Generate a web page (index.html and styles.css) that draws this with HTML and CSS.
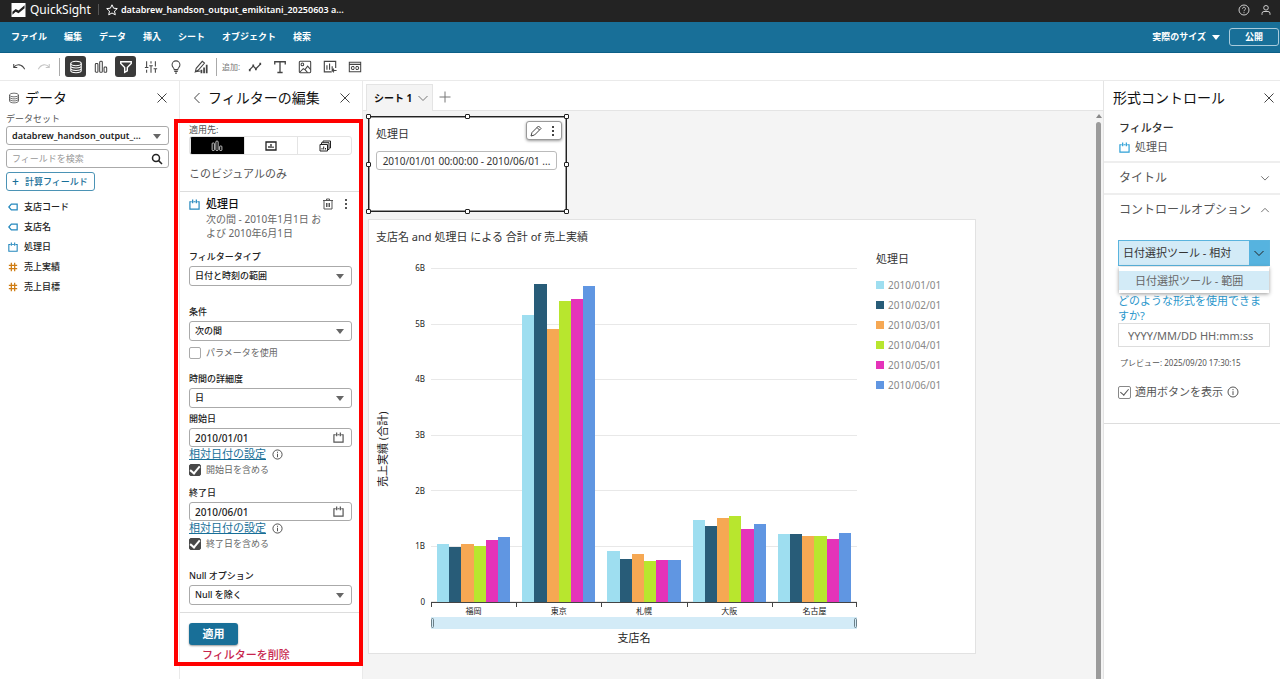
FILE: index.html
```html
<!DOCTYPE html>
<html lang="ja">

<head>
    <meta charset="UTF-8">
    <meta name="viewport" content="width=device-width, initial-scale=1.0">
    <title>QuickSight</title>
    <link rel="stylesheet" href="styles.css">
</head>

<body>
    <!-- shared icons -->
    <svg class="sprite" aria-hidden="true">
        <symbol id="i-close" viewBox="0 0 12 12"><path d="M1.5 1.5l9 9M10.5 1.5l-9 9" /></symbol>
        <symbol id="i-down" viewBox="0 0 12 12"><path d="M1.5 4L6 8.5L10.5 4" /></symbol>
        <symbol id="i-up" viewBox="0 0 12 12"><path d="M1.5 8.5L6 4l4.500 4.500" /></symbol>
        <symbol id="i-db" viewBox="0 0 16 16"><ellipse cx="8" cy="4" rx="6" ry="2.500" /><path d="M2 4v8c0 1.400 2.700 2.500 6 2.500s6-1.100 6-2.500V4M2 6.700c0 1.400 2.700 2.500 6 2.500s6-1.100 6-2.500M2 9.400c0 1.400 2.700 2.500 6 2.500s6-1.100 6-2.500" /></symbol>
        <symbol id="i-bars" viewBox="0 0 16 16"><rect x="1.500" y="4" width="3" height="10" rx="1" /><rect x="6.500" y="1.500" width="3" height="12.500" rx="1" /><rect x="11.500" y="8" width="3" height="6" rx="1" /></symbol>
        <symbol id="i-cal" viewBox="0 0 12 12"><path d="M3 3H1v8h10V3H9M5 3h2M4 .5v4M8 .5v4" stroke-width="1.300" /></symbol>
        <symbol id="i-tag" viewBox="0 0 12 12"><path d="M4 2.500h7v7H4L1 6z" /></symbol>
        <symbol id="i-hash" viewBox="0 0 12 12"><path d="M4 1v10M8 1v10M1 4h10M1 8h10" /></symbol>
        <symbol id="i-info" viewBox="0 0 12 12"><circle cx="6" cy="6" r="5" /><path d="M6 5.200V9M6 3v1.200" /></symbol>
        <symbol id="i-dots" viewBox="0 0 12 12"><path d="M6 1v2M6 5v2M6 9v2" stroke-width="2" /></symbol>
    </svg>

    <header class="topbar">
        <svg class="logo" viewBox="0 0 15 15"><path d="M0 0h15v15H0z" fill="#fff" /><path d="M1 9.500l3.500-3 3 1.500L14 2.500v3L7.500 11l-3-1.500L1 12.500z" fill="#232323" /></svg>
        <span class="brand">QuickSight</span>
        <span class="divider"></span>
        <button class="icon-btn" aria-label="お気に入り"><svg class="icon" viewBox="0 0 12 12"><path d="M6 .8l1.600 3.400 3.700.4-2.800 2.500.8 3.700L6 9l-3.300 1.800.8-3.700L.7 4.600l3.700-.4z" /></svg></button>
        <span class="doc-name">databrew_handson_output_emikitani_20250603 a...</span>
        <div class="account">
            <button class="icon-btn" aria-label="ヘルプ"><svg class="icon" viewBox="0 0 12 12"><circle cx="6" cy="6" r="5" /><path d="M4.500 4.700c0-2 3-2 3 0C7.500 6 6 5.800 6 7.200M6 8.200v1" /></svg></button>
            <button class="icon-btn" aria-label="アカウント"><svg class="icon" viewBox="0 0 12 12"><circle cx="6" cy="3.800" r="2.300" /><path d="M2 10.800V9.500Q2 7.500 4 7.500h4q2 0 2 2v1.300" /></svg></button>
        </div>
    </header>

    <nav class="menubar">
        <a href="#">ファイル</a>
        <a href="#">編集</a>
        <a href="#">データ</a>
        <a href="#">挿入</a>
        <a href="#">シート</a>
        <a href="#">オブジェクト</a>
        <a href="#">検索</a>
        <div class="publish">
            <button class="size-btn">実際のサイズ <i class="caret"></i></button>
            <button class="publish-btn">公開</button>
        </div>
    </nav>

    <div class="toolbar">
        <button class="tool" aria-label="元に戻す"><svg class="icon" viewBox="0 0 16 16"><path d="M2 4.500v4h4M2 8.500C5 4.500 11 4 14.500 10.500" /></svg></button>
        <button class="tool off" aria-label="やり直す"><svg class="icon" viewBox="0 0 16 16"><path d="M14 4.500v4h-4M14 8.500C11 4.500 5 4 1.500 10.500" /></svg></button>
        <span class="line"></span>
        <button class="tool on" aria-label="データ"><svg class="icon"><use href="#i-db" /></svg></button>
        <button class="tool" aria-label="ビジュアル"><svg class="icon"><use href="#i-bars" /></svg></button>
        <button class="tool on" aria-label="フィルター"><svg class="icon" viewBox="0 0 16 16"><path d="M2 2h12v2L9.500 8.500v4L6.500 14V8.500L2 4z" stroke-width="1.600" /></svg></button>
        <button class="tool" aria-label="パラメータ"><svg class="icon" viewBox="0 0 16 16"><path d="M3 1.500v7M3 11v3.500M8 1.500V4M8 6.500v8M13 1.500v6M13 10v4.500M1 8.500h4M6 6.500h4M11 10h4" /></svg></button>
        <button class="tool" aria-label="インサイト"><svg class="icon" viewBox="0 0 16 16"><path d="M6 11C6 9 3.500 8.500 3.500 5.500a4.500 4.500 0 0 1 9 0C12.500 8.500 10 9 10 11zM6 13h4M7 15h2" /></svg></button>
        <button class="tool" aria-label="テーマ"><svg class="icon" viewBox="0 0 16 16"><path d="M1.500 13.500l1-4 7-8 2.500 2-7 8zM1.500 13.500l6-1" /><path d="M8.500 11v4M11.500 8.500V15M14.500 5.500V15" stroke-width="2" /></svg></button>
        <span class="line"></span>
        <span class="add-label">追加:</span>
        <button class="tool" aria-label="ビジュアルを追加"><svg class="icon" viewBox="0 0 16 16"><path d="M2 11l4-4 3 3 5-5" stroke-width="1.500" /><path d="M1 11.500h2M5 6.500h2M8 10.500h2M13 4.500h2" stroke-width="2.500" /></svg></button>
        <button class="tool" aria-label="テキストを追加"><svg class="icon" viewBox="0 0 16 16"><path d="M2 5V2h12v3M8 2v12M5 14.300h6" stroke-width="1.500" /></svg></button>
        <button class="tool" aria-label="画像を追加"><svg class="icon" viewBox="0 0 16 16"><rect x="1.500" y="1.500" width="13" height="13" rx="1" /><circle cx="5" cy="5" r="1.500" /><path d="M2 14l4-4 2 1 3-4 3.500 4M8 11l3 3.500" /></svg></button>
        <button class="tool" aria-label="コントロールを追加"><svg class="icon" viewBox="0 0 16 16"><path d="M10 13.500H1.500v-12h13V9M4.500 11V6M7.500 11V4M10.500 11V7M15.500 12h-5M12.500 10l-2 2 2 2" stroke-width="1.300" /></svg></button>
        <button class="tool" aria-label="埋め込みを追加"><svg class="icon" viewBox="0 0 16 16"><path d="M1.500 2.500h13v11h-13zM1.500 5h13M7 7.500H5.500a1.700 1.700 0 0 0 0 3.400H7M9 7.500h1.500a1.700 1.700 0 0 1 0 3.400H9M6 9.200h4" /></svg></button>
    </div>

    <div class="main">
        <aside class="data-panel">
            <div class="panel-head">
                <svg class="icon head-icon"><use href="#i-db" /></svg>
                <h2>データ</h2>
                <button class="icon-btn push" aria-label="閉じる"><svg class="icon"><use href="#i-close" /></svg></button>
            </div>
            <label class="data-label" for="dataset">データセット</label>
            <div class="select"><select id="dataset" class="bold"><option>databrew_handson_output_...</option></select></div>
            <div class="search">
                <input type="text" placeholder="フィールドを検索" aria-label="フィールドを検索">
                <svg class="icon" viewBox="0 0 12 12"><circle cx="5" cy="5" r="3.500" /><path d="M7.600 7.600L11 11" /></svg>
            </div>
            <button class="calc-btn"><span>+</span>計算フィールド</button>
            <ul class="fields">
                <li><svg class="icon dim"><use href="#i-tag" /></svg>支店コード</li>
                <li><svg class="icon dim"><use href="#i-tag" /></svg>支店名</li>
                <li><svg class="icon dim"><use href="#i-cal" /></svg>処理日</li>
                <li><svg class="icon num"><use href="#i-hash" /></svg>売上実績</li>
                <li><svg class="icon num"><use href="#i-hash" /></svg>売上目標</li>
            </ul>
        </aside>

        <section class="filter-panel">
            <div class="panel-head">
                <button class="icon-btn" aria-label="戻る"><svg class="icon" viewBox="0 0 12 12"><path d="M8.500 1L3.500 6l5 5" /></svg></button>
                <h2>フィルターの編集</h2>
                <button class="icon-btn push" aria-label="閉じる"><svg class="icon"><use href="#i-close" /></svg></button>
            </div>
            <div class="filter-body">
                <div class="scope">
                    <span class="scope-label">適用先:</span>
                    <div class="segments">
                        <button class="active" aria-label="このビジュアル"><svg class="icon"><use href="#i-bars" /></svg></button>
                        <button aria-label="このシート"><svg class="icon" viewBox="0 0 12 12"><path d="M1 2h10v8H1z" stroke-width="1.300" /><path d="M4 8V6M6 8V4M8 8V6.500" stroke-width="1.300" /></svg></button>
                        <button aria-label="すべてのシート"><svg class="icon" viewBox="0 0 12 12"><path d="M1 4.500h7.500V11H1zM2.500 4V2.700H10V9.500H9M4 2.500V1h7.500v7H10.500M3 9.500V8M4.700 9.500V6.500M6.500 9.500V8" /></svg></button>
                    </div>
                    <p>このビジュアルのみ</p>
                </div>
                <form class="filter-form">
                    <div class="filter-name">
                        <svg class="icon dim"><use href="#i-cal" /></svg>
                        <h3>処理日</h3>
                        <button type="button" class="icon-btn push" aria-label="削除"><svg class="icon" viewBox="0 0 12 12"><path d="M1 2.500h10M4.500 2V1h3v1M2 2.500V11h8V2.500M4.500 5v4M6 5v4M7.500 5v4" /></svg></button>
                        <button type="button" class="icon-btn" aria-label="メニュー"><svg class="icon"><use href="#i-dots" /></svg></button>
                    </div>
                    <p class="summary">次の間 - 2010年1月1日 および 2010年6月1日</p>

                    <label class="name" for="type">フィルタータイプ</label>
                    <div class="select"><select id="type"><option>日付と時刻の範囲</option></select></div>

                    <label class="name gap-l" for="cond">条件</label>
                    <div class="select"><select id="cond"><option>次の間</option></select></div>
                    <label class="check param"><input type="checkbox">パラメータを使用</label>

                    <label class="name" for="grain">時間の詳細度</label>
                    <div class="select"><select id="grain"><option>日</option></select></div>

                    <label class="name gap-s" for="start">開始日</label>
                    <div class="date"><input type="text" id="start" value="2010/01/01"><svg class="icon"><use href="#i-cal" /></svg></div>
                    <div class="relative-date"><a href="#">相対日付の設定</a><svg class="icon"><use href="#i-info" /></svg></div>
                    <label class="check"><input type="checkbox" checked>開始日を含める</label>

                    <label class="name" for="end">終了日</label>
                    <div class="date"><input type="text" id="end" value="2010/06/01"><svg class="icon"><use href="#i-cal" /></svg></div>
                    <div class="relative-date"><a href="#">相対日付の設定</a><svg class="icon"><use href="#i-info" /></svg></div>
                    <label class="check"><input type="checkbox" checked>終了日を含める</label>

                    <label class="name gap-l" for="nulls">Null オプション</label>
                    <div class="select"><select id="nulls"><option>Null を除く</option></select></div>
                </form>
                <div class="filter-actions">
                    <button class="apply">適用</button>
                    <button class="remove">フィルターを削除</button>
                </div>
            </div>
        </section>

        <main class="workspace">
            <div class="tabs">
                <button class="tab">シート 1 <svg class="icon"><use href="#i-down" /></svg></button>
                <button class="icon-btn" aria-label="シートを追加"><svg class="icon" viewBox="0 0 12 12"><path d="M6 .5v11M.5 6h11" /></svg></button>
            </div>
            <div class="scroll-area">
                <div class="sheet">
                    <div class="control-card">
                        <h3>処理日</h3>
                        <button class="range">2010/01/01 00:00:00 - 2010/06/01 ...</button>
                        <div class="card-tools">
                            <button class="icon-btn" aria-label="編集"><svg class="icon" viewBox="0 0 12 12"><path d="M1 11l1-3.500L8.500 1 11 3.500 4.500 10zM7 2.500L9.500 5" /></svg></button>
                            <button class="icon-btn" aria-label="メニュー"><svg class="icon"><use href="#i-dots" /></svg></button>
                        </div>
                        <div class="handles"><i></i><i></i><i></i><i></i><b></b><i></i><i></i><i></i><i></i></div>
                    </div>

                    <div class="chart-card">
                        <h3>支店名 and 処理日 による 合計 of 売上実績</h3>
                        <div class="chart">
                            <div class="y-title">売上実績 (合計)</div>
                            <div class="y-axis">
                                <span>6B</span><span>5B</span><span>4B</span><span>3B</span><span>2B</span><span>1B</span><span>0</span>
                            </div>
                            <div class="grid-lines"><i></i><i></i><i></i><i></i><i></i><i></i><i></i></div>
                            <div class="bars" id="bars"></div>
                            <div class="x-axis">
                                <span>福岡</span><span>東京</span><span>札幌</span><span>大阪</span><span>名古屋</span>
                            </div>
                            <div class="zoom-bar"><i></i><i></i></div>
                            <div class="x-title">支店名</div>
                            <div class="legend">
                                <h4>処理日</h4>
                                <ul>
                                    <li><i class="s1"></i>2010/01/01</li>
                                    <li><i class="s2"></i>2010/02/01</li>
                                    <li><i class="s3"></i>2010/03/01</li>
                                    <li><i class="s4"></i>2010/04/01</li>
                                    <li><i class="s5"></i>2010/05/01</li>
                                    <li><i class="s6"></i>2010/06/01</li>
                                </ul>
                            </div>
                        </div>
                    </div>
                </div>
                <div class="scrollbar"><i class="arrow"></i><i class="thumb"></i></div>
            </div>
        </main>

        <aside class="format-panel">
            <div class="panel-head">
                <h2>形式コントロール</h2>
                <button class="icon-btn push" aria-label="閉じる"><svg class="icon"><use href="#i-close" /></svg></button>
            </div>
            <div class="format-filter">
                <h3>フィルター</h3>
                <p><svg class="icon"><use href="#i-cal" /></svg>処理日</p>
            </div>
            <button class="section-btn">タイトル<svg class="icon"><use href="#i-down" /></svg></button>
            <div class="options">
                <button class="section-btn">コントロールオプション<svg class="icon"><use href="#i-up" /></svg></button>
                <div class="options-body">
                    <div class="style-select">
                        <select aria-label="スタイル"><option>日付選択ツール - 相対</option></select>
                        <svg class="icon"><use href="#i-down" /></svg>
                        <ul class="style-menu"><li>日付選択ツール - 範囲</li></ul>
                    </div>
                    <a class="format-help" href="#">どのような形式を使用できますか?</a>
                    <input class="format-input" type="text" placeholder="YYYY/MM/DD HH:mm:ss" aria-label="日付形式">
                    <p class="preview">プレビュー: 2025/09/20 17:30:15</p>
                    <label class="show-apply"><input type="checkbox" checked>適用ボタンを表示 <svg class="icon"><use href="#i-info" /></svg></label>
                </div>
            </div>
        </aside>
    </div>

    <script>
        // sales per branch in billions, one value for each month
        const sales = [
            [1.05, 0.99, 1.04, 1.01, 1.12, 1.17],
            [5.15, 5.72, 4.91, 5.41, 5.44, 5.67],
            [0.91, 0.77, 0.87, 0.73, 0.75, 0.76],
            [1.47, 1.37, 1.51, 1.55, 1.31, 1.40],
            [1.22, 1.22, 1.18, 1.18, 1.13, 1.24],
        ];
        const max = 6;

        document.getElementById("bars").innerHTML = sales.map((row) => {
            let cols = row.map((v, i) => `<i class="s${i + 1}" style="height:${v / max * 100}%"></i>`).join("");
            return `<div class="group">${cols}</div>`;
        }).join("");
    </script>
</body>

</html>
```
FILE: styles.css
```css
* {
    padding: 0;
    margin: 0;
    box-sizing: border-box;
}

body {
    min-height: 100vh;
    display: flex;
    flex-direction: column;
    font-family: "Noto Sans", "Noto Sans CJK JP", sans-serif;
    font-size: 9px;
    line-height: 12px;
    color: #222;
    background-color: #fff;
}

button,
input,
select {
    font: inherit;
    color: inherit;
    border: none;
    background: none;
}

button {
    cursor: pointer;
}

ul {
    list-style: none;
}

h2 {
    font-size: 14px;
    font-weight: 400;
    line-height: 20px;
    color: #111;
}

h3,
h4 {
    font-size: 11px;
    font-weight: 500;
    line-height: 16px;
}

.sprite {
    display: none;
}

.icon {
    display: block;
    flex: none;
    width: 12px;
    height: 12px;
    fill: none;
    stroke: currentColor;
}

.icon-btn {
    flex: none;
}

.push {
    margin-left: auto;
}

.caret {
    border: 4px solid transparent;
    border-top: 5px solid #fff;
    border-bottom: none;
}

/* top bars */
.topbar {
    height: 22px;
    display: flex;
    align-items: center;
    padding: 0 8px 3px 11px;
    background-color: #232323;
    color: #fff;
}

.logo {
    width: 15px;
    height: 14px;
    margin-right: 4px;
}

.brand {
    font-size: 12px;
    line-height: 16px;
}

.divider {
    width: 1px;
    height: 11px;
    margin: 0 7px;
    background-color: #555;
}

.doc-name {
    margin-left: 3px;
    font-weight: 600;
}

.account {
    margin-left: auto;
    display: flex;
    gap: 10px;
    color: #ccc;
}

.menubar {
    height: 31px;
    display: flex;
    align-items: center;
    gap: 17px;
    padding: 0 1px 0 11px;
    background-color: #186f98;
    border-bottom: 1px solid #0c5f87;
    color: #fff;
    font-weight: 700;
}

.menubar a {
    color: #fff;
    text-decoration: none;
}

.publish {
    margin-left: auto;
    display: flex;
    align-items: center;
    gap: 9px;
}

.size-btn {
    display: flex;
    align-items: center;
    gap: 6px;
}

.publish-btn {
    width: 50px;
    height: 18px;
    border: 1px solid #a9cbdc;
    border-radius: 3px;
}

.toolbar {
    height: 28px;
    display: flex;
    align-items: center;
    gap: 4px;
    padding: 0 8px;
    border-bottom: 1px solid #eaeaea;
    color: #444;
}

.tool {
    width: 21px;
    height: 21px;
    display: grid;
    place-items: center;
    border-radius: 3px;
}

.tool .icon {
    width: 14px;
    height: 14px;
    stroke-width: 1.2;
}

.tool.on {
    background-color: #3a3a3a;
    color: #fff;
}

.tool.off {
    color: #c4c4c4;
}

.line {
    width: 1px;
    height: 18px;
    margin: 0 1px;
    background-color: #aaa;
}

.add-label {
    color: #777;
    font-size: 8px;
}

/* panels */
.main {
    flex: 1;
    display: flex;
}

.panel-head {
    height: 32px;
    display: flex;
    align-items: center;
    gap: 5px;
    color: #444;
}

.data-panel {
    width: 180px;
    flex: none;
    padding: 0 10px 0 6px;
    border-right: 1px solid #eaeaea;
}

.data-panel .panel-head {
    padding: 2px 1px 0 2px;
}

.data-label {
    display: block;
    margin-bottom: 1px;
    color: #555;
}

.select {
    position: relative;
}

.select select,
.date,
.search {
    width: 100%;
    height: 20px;
    padding: 0 5px;
    border: 1px solid #aaa;
    border-radius: 3px;
    appearance: none;
}

.select::after {
    content: "";
    position: absolute;
    right: 8px;
    top: 8px;
    border: 4px solid transparent;
    border-top: 5px solid #666;
    border-bottom: none;
}

.data-panel select,
.search,
.calc-btn,
.date {
    height: 19px;
}

select.bold {
    font-weight: 600;
}

.search,
.date {
    display: flex;
    align-items: center;
}

.search {
    margin: 4px 0;
}

.search input,
.date input {
    flex: 1;
    min-width: 0;
    outline: none;
}

.search input::placeholder {
    color: #999;
}

.search .icon {
    stroke-width: 1.5;
}

.calc-btn {
    display: flex;
    align-items: center;
    gap: 6px;
    padding: 0 6px 0 5px;
    border: 1px solid #4b93b5;
    border-radius: 3px;
    color: #186f98;
    font-weight: 500;
}

.calc-btn span {
    font-size: 12px;
}

.fields {
    margin-top: 6px;
}

.fields li {
    height: 20px;
    display: flex;
    align-items: center;
    gap: 6px;
    padding-left: 2px;
    font-weight: 500;
}

.fields .icon {
    width: 10px;
    height: 10px;
    stroke-width: 1.5;
}

.dim {
    color: #2588bd;
}

.num {
    color: #cf7c12;
}

/* filter editor */
.filter-panel {
    width: 183px;
    flex: none;
    border-right: 1px solid #eaeaea;
}

.filter-panel .panel-head {
    padding: 2px 11px 0 11px;
}

.filter-body {
    position: relative;
    padding: 11px 0 4px;
}

/* red frame round the whole filter form */
.filter-body::after {
    content: "";
    position: absolute;
    top: 6px;
    right: -1px;
    bottom: 0;
    left: -6px;
    border: 4px solid #f00;
    pointer-events: none;
}

.scope {
    padding: 0 10px 9px 9px;
    border-bottom: 1px solid #ddd;
    color: #555;
}

.scope-label {
    display: block;
}

.segments {
    height: 19px;
    display: flex;
    border: 1px solid #e4e4e4;
    border-radius: 3px;
    overflow: hidden;
}

.segments button {
    flex: 1;
    display: grid;
    place-items: center;
    color: #222;
    border-left: 1px solid #e4e4e4;
}

.segments button.active {
    background-color: #000;
    color: #fff;
}

.scope p {
    margin-top: 11px;
    font-size: 11px;
    line-height: 16px;
}

.filter-form {
    padding: 4px 10px 7px 9px;
    border-bottom: 1px solid #ddd;
}

.filter-name {
    display: flex;
    align-items: center;
    gap: 6px;
    color: #555;
}

.filter-name h3 {
    color: #111;
}

.filter-name .dim {
    width: 11px;
    height: 11px;
    color: #2588bd;
}

.summary {
    padding: 0 30px 0 17px;
    font-size: 10px;
    line-height: 14px;
    color: #666;
}

.name {
    display: block;
    margin: 11px 0 3px;
    font-size: 9px;
    font-weight: 500;
}

.name.gap-l {
    margin-top: 20px;
}

.name.gap-s {
    margin-top: 5px;
}

.filter-form select {
    font-weight: 500;
}

.date input {
    font-size: 10px;
    font-weight: 500;
}

.date .icon {
    margin-right: 2px;
    width: 11px;
    height: 11px;
    color: #555;
}

.relative-date {
    display: flex;
    align-items: center;
    gap: 6px;
    font-size: 11px;
    line-height: 14px;
    color: #444;
}

.relative-date a {
    color: #186f98;
}

.relative-date .icon {
    width: 11px;
    height: 11px;
}

.check {
    display: flex;
    align-items: center;
    gap: 5px;
    margin-top: 3px;
    color: #666;
}

.check.param {
    margin: 6px 0 14px;
}

.check input,
.show-apply input {
    appearance: none;
    width: 12px;
    height: 12px;
    display: grid;
    place-items: center;
    border: 1px solid #aaa;
    border-radius: 2px;
}

.check input:checked {
    background-color: #484848;
    border-color: #484848;
    color: #fff;
}

.check input:checked::after,
.show-apply input:checked::after {
    content: "";
    width: 4px;
    height: 8px;
    border: solid currentColor;
    border-width: 0 2px 2px 0;
    transform: rotate(40deg);
    margin-top: -2px;
}

.filter-actions {
    padding: 10px 9px 0;
    display: flex;
    flex-direction: column;
    align-items: flex-start;
    gap: 3px;
    font-size: 11px;
    line-height: 14px;
}

.apply {
    width: 49px;
    height: 22px;
    border-radius: 3px;
    background-color: #186f98;
    box-shadow: 0 1px 2px rgba(0, 0, 0, 0.4);
    color: #fff;
    font-weight: 700;
}

.remove {
    margin-left: 13px;
    color: #c7254e;
    font-weight: 500;
}

/* sheet */
.workspace {
    flex: 1;
    min-width: 0;
    display: flex;
    flex-direction: column;
}

.tabs {
    height: 30px;
    display: flex;
    align-items: center;
    gap: 6px;
    padding: 3px 3px 0;
    border-bottom: 1px solid #e4e4e4;
    color: #777;
}

.tab {
    height: 27px;
    display: flex;
    align-items: center;
    gap: 5px;
    padding: 0 3px 0 7px;
    background-color: #f4f4f4;
    border: 1px solid #e4e4e4;
    border-bottom: none;
    color: #111;
    font-size: 10px;
    font-weight: 700;
}

.tab .icon {
    color: #777;
}

.scroll-area {
    flex: 1;
    display: flex;
    background-color: #f4f4f4;
}

.sheet {
    flex: 1;
    display: flex;
    flex-direction: column;
    align-items: flex-start;
    gap: 7px;
    padding: 5px;
}

.control-card {
    position: relative;
    width: 199px;
    height: 96px;
    padding: 9px 7px;
    background-color: #fff;
    border: 1px solid #222;
    outline: 1px solid #999;
    outline-offset: -2px;
}

.control-card h3,
.chart-card h3,
.legend h4 {
    font-weight: 400;
    color: #333;
}

.range {
    width: 181px;
    height: 19px;
    margin-top: 9px;
    border: 1px solid #bbb;
    border-radius: 3px;
    color: #333;
    font-size: 10px;
}

.card-tools {
    position: absolute;
    top: 4px;
    right: 4px;
    width: 36px;
    height: 19px;
    display: flex;
    align-items: center;
    justify-content: space-around;
    background-color: #fff;
    border: 1px solid #999;
    border-radius: 3px;
    box-shadow: 0 1px 3px rgba(0, 0, 0, 0.4);
    color: #444;
}

.handles {
    position: absolute;
    inset: -3px;
    display: grid;
    grid-template-columns: repeat(3, 5px);
    grid-template-rows: repeat(3, 5px);
    justify-content: space-between;
    align-content: space-between;
    pointer-events: none;
}

.handles i {
    border: 1px solid #222;
    border-radius: 1px;
    background-color: #fff;
}

.chart-card {
    width: 100%;
    max-width: 608px;
    padding: 9px 7px 6px;
    background-color: #fff;
    border: 1px solid #e2e2e2;
}

.chart {
    display: grid;
    grid-template-columns: 35px 20px 1fr 111px;
    grid-template-rows: 334px 18px auto auto;
    padding-top: 23px;
}

.y-title {
    grid-area: 1 / 1;
    width: 14px;
    align-self: end;
    height: 190px;
    writing-mode: vertical-rl;
    text-orientation: sideways;
    transform: rotate(180deg);
    text-align: right;
    font-size: 11px;
    line-height: 14px;
}

.y-axis {
    grid-area: 1 / 2;
    display: flex;
    flex-direction: column;
    justify-content: space-between;
    margin: -6px 0;
    padding-right: 6px;
    text-align: right;
    font-size: 8px;
}

.grid-lines {
    grid-area: 1 / 3;
    display: flex;
    flex-direction: column;
    justify-content: space-between;
}

.grid-lines i {
    height: 1px;
    background-color: #e8e8e8;
}

.bars {
    grid-area: 1 / 3;
    display: flex;
}

.group {
    flex: 1;
    display: flex;
    align-items: flex-end;
    padding: 0 6px;
}

.group i {
    flex: 1;
}

.s1 {
    background-color: #9edef0;
}

.s2 {
    background-color: #285c78;
}

.s3 {
    background-color: #f6a853;
}

.s4 {
    background-color: #b8e62e;
}

.s5 {
    background-color: #e533b9;
}

.s6 {
    background-color: #6096e2;
}

.x-axis {
    grid-area: 2 / 3;
    display: flex;
    align-items: flex-start;
    border-top: 1px solid #444;
    font-size: 8px;
    text-align: center;
}

.x-axis span {
    flex: 1;
    padding-top: 2px;
    background: linear-gradient(#444, #444) no-repeat left top / 1px 4px;
}

.x-axis span:last-child {
    background: linear-gradient(#444, #444) no-repeat left top / 1px 4px, linear-gradient(#444, #444) no-repeat right top / 1px 4px;
}

.zoom-bar {
    grid-area: 3 / 3;
    height: 12px;
    margin-top: -3px;
    display: flex;
    justify-content: space-between;
    align-items: center;
    background-color: #d3ebf7;
}

.zoom-bar i {
    width: 3px;
    height: 10px;
    border: 1px solid #6b7f88;
    border-radius: 2px;
}

.x-title {
    grid-area: 4 / 2 / 5 / 4;
    margin: 2px 0;
    text-align: center;
    font-size: 11px;
    line-height: 14px;
}

.legend {
    grid-area: 1 / 4;
    padding-left: 19px;
    margin-top: -17px;
    color: #888;
    font-size: 10px;
}

.legend ul {
    margin-top: 8px;
}

.legend li {
    height: 20px;
    display: flex;
    align-items: center;
    gap: 4px;
}

.legend li i {
    width: 8px;
    height: 8px;
}

.scrollbar {
    width: 9px;
    display: flex;
    flex-direction: column;
    align-items: center;
    gap: 4px;
    padding-top: 3px;
}

.scrollbar .arrow {
    border: 3px solid transparent;
    border-bottom: 4px solid #888;
    border-top: none;
}

.scrollbar .thumb {
    flex: 1;
    width: 5px;
    border-radius: 3px 3px 0 0;
    background-color: #9b9b9b;
}

/* format panel */
.format-panel {
    width: 177px;
    flex: none;
    border-left: 1px solid #e4e4e4;
    color: #555;
}

.format-panel .panel-head {
    padding: 2px 5px 0 9px;
}

.format-filter {
    padding: 7px 15px 6px;
    border-bottom: 2px solid #eee;
}

.format-filter h3 {
    font-weight: 500;
    color: #333;
}

.format-filter p {
    display: flex;
    align-items: center;
    gap: 5px;
    margin-top: 3px;
    font-size: 11px;
    line-height: 16px;
}

.format-filter .icon {
    width: 11px;
    height: 11px;
    color: #2ea0d6;
}

.section-btn {
    width: 100%;
    height: 30px;
    display: flex;
    align-items: center;
    justify-content: space-between;
    padding: 0 10px 0 15px;
    font-size: 12px;
}

.section-btn .icon {
    width: 10px;
    height: 10px;
}

.options {
    border-top: 2px solid #eee;
    border-bottom: 1px solid #ddd;
}

.options-body {
    padding: 15px 10px 24px 14px;
    font-size: 11px;
}

.style-select {
    position: relative;
    display: flex;
    align-items: center;
    height: 26px;
    border: 1px solid #5ab4de;
    background-color: #d3ebf7;
}

.style-select select {
    flex: 1;
    min-width: 0;
    height: 24px;
    padding-left: 4px;
    appearance: none;
    color: #333;
}

.style-select > .icon {
    width: 20px;
    height: 24px;
    padding: 0 4px;
    background-color: #56b3df;
    color: #222;
}

.style-menu {
    position: absolute;
    top: 26px;
    left: 0;
    right: 0;
    padding: 4px 0 3px;
    background-color: #fff;
    box-shadow: 0 1px 4px rgba(0, 0, 0, 0.4);
}

.style-menu li {
    padding-left: 16px;
    line-height: 19px;
    background-color: #d3ebf7;
    color: #666;
}

.format-help {
    display: block;
    margin-top: 27px;
    line-height: 15px;
    color: #2b97cc;
    text-decoration: none;
}

.format-input {
    width: 100%;
    height: 24px;
    padding: 0 9px;
    border: 1px solid #ddd;
}

.format-input::placeholder {
    color: #666;
}

.preview {
    margin: 10px 2px 16px;
    font-size: 8px;
}

.show-apply {
    display: flex;
    align-items: center;
    gap: 4px;
    line-height: 14px;
}

.show-apply input {
    width: 13px;
    height: 13px;
    border-color: #888;
}

.show-apply input:checked::after {
    height: 7px;
    border-width: 0 1px 1px 0;
}
```
